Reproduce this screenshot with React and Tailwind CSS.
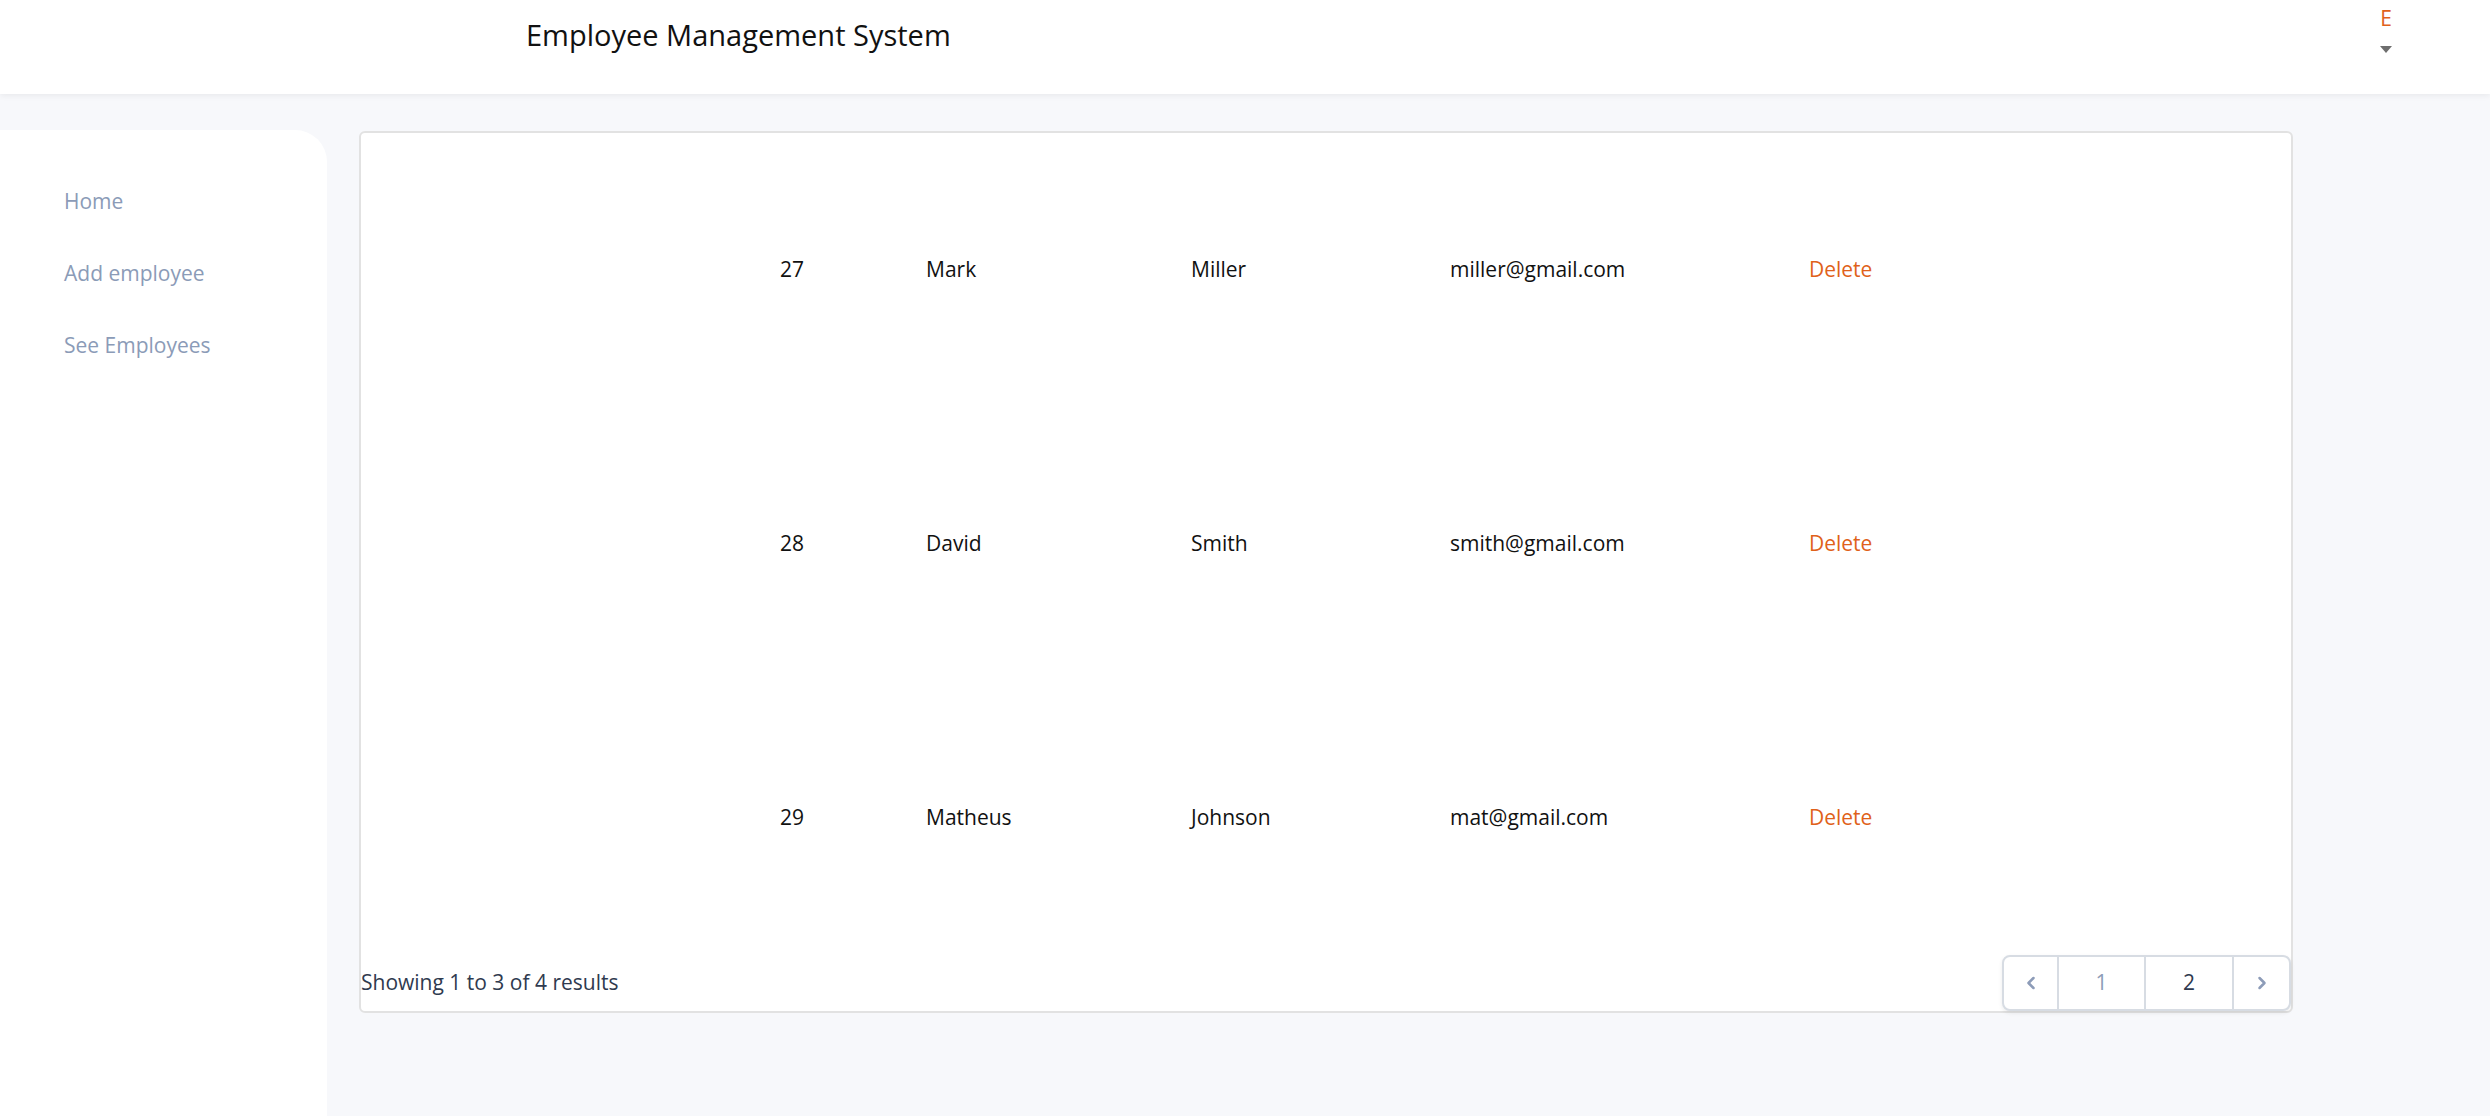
import { ChevronLeft, ChevronRight } from 'lucide-react';

const employees = [
  { id: 27, firstName: 'Mark', lastName: 'Miller', email: 'miller@gmail.com' },
  { id: 28, firstName: 'David', lastName: 'Smith', email: 'smith@gmail.com' },
  { id: 29, firstName: 'Matheus', lastName: 'Johnson', email: 'mat@gmail.com' },
];

const navItems = ['Home', 'Add employee', 'See Employees'];

const Header = () => (
  <header className="relative z-10 flex h-[94px] items-start bg-white shadow-[0_2px_6px_rgba(0,0,0,0.06)]">
    <h1 className="ml-[526px] mt-[16px] text-[29px] leading-[38px] text-[#111]">Employee Management System</h1>
    <div className="ml-auto mr-[92px] mt-[4px] flex w-[24px] flex-col items-center">
      <span className="text-[21px] leading-[28px] text-[#e0611a]">E</span>
      <svg width="12" height="7" viewBox="0 0 12 7" className="mt-[14px]">
        <path d="M0 0h12L6 7z" fill="#6e6e6e" />
      </svg>
    </div>
  </header>
);

const Sidebar = () => (
  <aside className="mt-[36px] w-[327px] shrink-0 rounded-tr-[32px] bg-white pt-[57px]">
    <nav className="flex flex-col gap-[44px] pl-[64px]">
      {navItems.map((item) => (
        <a key={item} href="#" className="text-[21px] leading-[28px] text-[#8b9bb7]">
          {item}
        </a>
      ))}
    </nav>
  </aside>
);

const Pagination = () => (
  <div className="flex h-[56px] overflow-hidden rounded-[8px] border-2 border-[#d7dce3] bg-white shadow-[0_2px_4px_rgba(0,0,0,0.08)]">
    <button className="flex w-[55px] items-center justify-center border-r-2 border-[#d7dce3] text-[#8d9cb8]">
      <ChevronLeft size={20} strokeWidth={3} />
    </button>
    <button className="w-[87px] border-r-2 border-[#d7dce3] text-[21px] text-[#8d9cb8]">1</button>
    <button className="w-[88px] border-r-2 border-[#d7dce3] text-[21px] text-[#2f3a4f]">2</button>
    <button className="flex w-[55px] items-center justify-center text-[#8d9cb8]">
      <ChevronRight size={20} strokeWidth={3} />
    </button>
  </div>
);

const EmployeeTable = () => (
  <section className="mt-[37px] ml-[32px] w-[1934px] rounded-[6px] border-2 border-[#e2e2e2] bg-white">
    <div className="flex flex-col">
      {employees.map((employee) => (
        <div key={employee.id} className="flex h-[274px] items-center pl-[419px] text-[21px] text-[#111]">
          <span className="w-[146px]">{employee.id}</span>
          <span className="w-[265px]">{employee.firstName}</span>
          <span className="w-[259px]">{employee.lastName}</span>
          <span className="w-[359px]">{employee.email}</span>
          <a href="#" className="text-[#e0611a]">Delete</a>
        </div>
      ))}
    </div>
    <div className="flex items-center justify-between">
      <p className="text-[21px] text-[#2f3a4f]">Showing 1 to 3 of 4 results</p>
      <Pagination />
    </div>
  </section>
);

const App = () => (
  <div className="min-h-[1116px] overflow-hidden bg-[#f7f8fb] font-['Open_Sans',sans-serif]">
    <Header />
    <div className="flex min-h-[1022px] items-start">
      <div className="flex self-stretch">
        <Sidebar />
      </div>
      <EmployeeTable />
    </div>
  </div>
);

export default App;
